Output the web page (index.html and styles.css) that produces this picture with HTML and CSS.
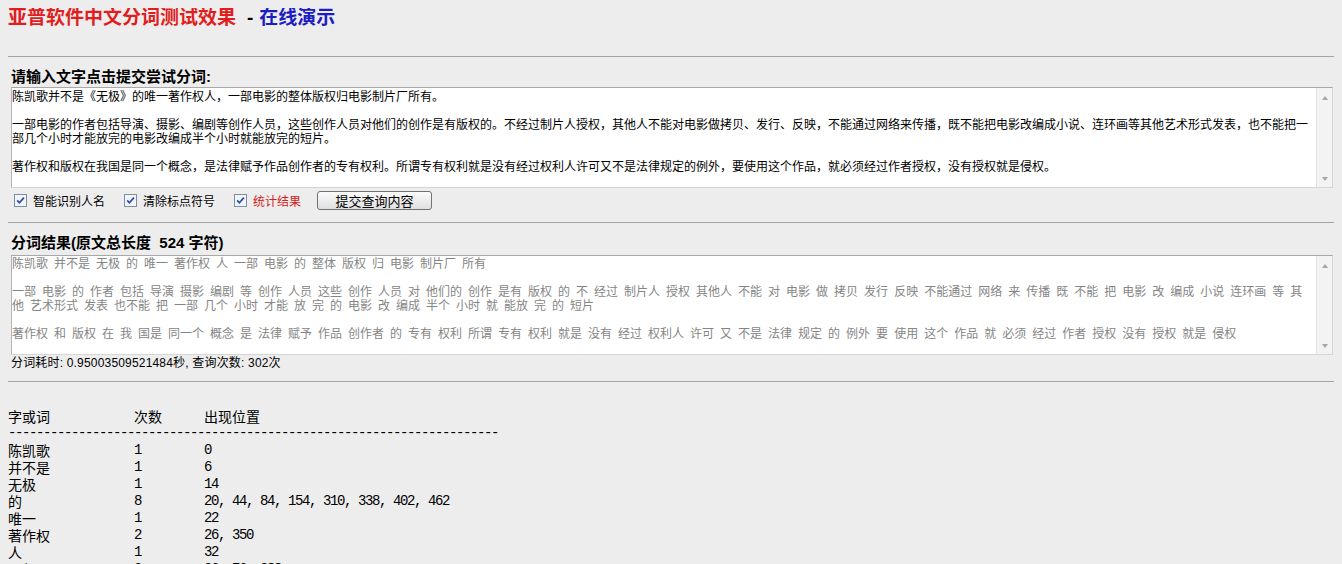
FILE: index.html
```html
<!DOCTYPE html>
<html>
<head>
  <meta charset="UTF-8">
  <title>亚普软件中文分词测试效果 - 在线演示</title>
  <link rel="stylesheet" href="styles.css">
</head>
<body>
  <h1 class="title"><span class="title-red">亚普软件中文分词测试效果</span><span class="title-dash">-</span><span class="title-blue">在线演示</span></h1>
  <hr class="rule rule-top">

  <h2 class="label">请输入文字点击提交尝试分词:</h2>
  <div class="textbox">
    <div class="textbox-text input-text">陈凯歌并不是《无极》的唯一著作权人，一部电影的整体版权归电影制片厂所有。

一部电影的作者包括导演、摄影、编剧等创作人员，这些创作人员对他们的创作是有版权的。不经过制片人授权，其他人不能对电影做拷贝、发行、反映，不能通过网络来传播，既不能把电影改编成小说、连环画等其他艺术形式发表，也不能把一部几个小时才能放完的电影改编成半个小时就能放完的短片。

著作权和版权在我国是同一个概念，是法律赋予作品创作者的专有权利。所谓专有权利就是没有经过权利人许可又不是法律规定的例外，要使用这个作品，就必须经过作者授权，没有授权就是侵权。</div>
    <div class="scrollbar"><span class="arrow-up"></span><span class="arrow-down"></span></div>
  </div>

  <div class="options">
    <label class="option">
      <svg class="check" viewBox="0 0 13 13" width="13" height="13"><rect x="0.5" y="0.5" width="12" height="12" fill="#f1f4f8" stroke="#7d8ea3"/><path d="M3.2 6.4 L5.4 8.8 L9.9 3.6" fill="none" stroke="#2b4db3" stroke-width="1.7"/></svg>
      智能识别人名
    </label>
    <label class="option">
      <svg class="check" viewBox="0 0 13 13" width="13" height="13"><rect x="0.5" y="0.5" width="12" height="12" fill="#f1f4f8" stroke="#7d8ea3"/><path d="M3.2 6.4 L5.4 8.8 L9.9 3.6" fill="none" stroke="#2b4db3" stroke-width="1.7"/></svg>
      清除标点符号
    </label>
    <label class="option option-red">
      <svg class="check" viewBox="0 0 13 13" width="13" height="13"><rect x="0.5" y="0.5" width="12" height="12" fill="#f1f4f8" stroke="#7d8ea3"/><path d="M3.2 6.4 L5.4 8.8 L9.9 3.6" fill="none" stroke="#2b4db3" stroke-width="1.7"/></svg>
      统计结果
    </label>
    <button class="submit-btn" type="button">提交查询内容</button>
  </div>
  <hr class="rule rule-mid">

  <h2 class="label">分词结果(原文总长度&nbsp; 524 字符)</h2>
  <div class="textbox textbox-result">
    <div class="textbox-text result-text">陈凯歌 并不是 无极 的 唯一 著作权 人 一部 电影 的 整体 版权 归 电影 制片厂 所有

一部 电影 的 作者 包括 导演 摄影 编剧 等 创作 人员 这些 创作 人员 对 他们的 创作 是有 版权 的 不 经过 制片人 授权 其他人 不能 对 电影 做 拷贝 发行 反映 不能通过 网络 来 传播 既 不能 把 电影 改 编成 小说 连环画 等 其他 艺术形式 发表 也不能 把 一部 几个 小时 才能 放 完 的 电影 改 编成 半个 小时 就 能放 完 的 短片

著作权 和 版权 在 我 国是 同一个 概念 是 法律 赋予 作品 创作者 的 专有 权利 所谓 专有 权利 就是 没有 经过 权利人 许可 又 不是 法律 规定 的 例外 要 使用 这个 作品 就 必须 经过 作者 授权 没有 授权 就是 侵权</div>
    <div class="scrollbar"><span class="arrow-up"></span><span class="arrow-down"></span></div>
  </div>
  <div class="timing">分词耗时: 0.95003509521484秒, 查询次数: 302次</div>
  <hr class="rule rule-bottom">

  <div class="stats">
    <div>字或词</div><div>次数</div><div>出现位置</div>
    <div class="dashes">----------------------------------------------------------------------</div>
    <div>陈凯歌</div><div class="num">1</div><div class="num">0</div>
    <div>并不是</div><div class="num">1</div><div class="num">6</div>
    <div>无极</div><div class="num">1</div><div class="num">14</div>
    <div>的</div><div class="num">8</div><div class="num">20, 44, 84, 154, 310, 338, 402, 462</div>
    <div>唯一</div><div class="num">1</div><div class="num">22</div>
    <div>著作权</div><div class="num">2</div><div class="num">26, 350</div>
    <div>人</div><div class="num">1</div><div class="num">32</div>
    <div>一部</div><div class="num">3</div><div class="num">36, 76, 288</div>
  </div>
</body>
</html>
```

FILE: styles.css
```css
body { margin: 8px; background: #ededed; color: #000; font-family: "Liberation Sans", "Noto Sans CJK SC", sans-serif; font-size: 12px; }

.title { margin: 0; font-size: 19px; line-height: 20px; font-weight: bold; }
.title-red { color: #e01e1e; }
.title-dash { margin: 0 6px 0 11px; }
.title-blue { color: #1c1cc4; }

.rule { height: 0; border: 0; border-top: 1px solid #a4a4a4; margin: 0; }
.rule-top { margin-top: 28px; }
.rule-mid { margin-top: 12px; }
.rule-bottom { margin-top: 11px; }

.label { margin: 10px 0 0 3px; font-size: 15px; line-height: 20px; font-weight: bold; }

.textbox { display: flex; justify-content: space-between; margin-left: 3px; width: 1322px; height: 101px; box-sizing: border-box; background: #fff; border: 1px solid; border-color: #a9a9a9 #d6d6d6 #d6d6d6 #b4b4b4; overflow: hidden; }
.textbox-result { margin-top: 2px; height: 100px; }
.textbox-text { width: 1293px; white-space: pre-wrap; line-height: 14px; font-size: 12px; word-spacing: 2.67px; }
.input-text { width: 1300px; padding-top: 2px; }
.result-text { padding-top: 1px; color: #858585; }

.scrollbar { display: flex; flex-direction: column; justify-content: space-between; align-items: center; width: 16px; padding: 8px 0 6px; box-sizing: border-box; background: #f3f3f3; border-left: 1px solid #e2e2e2; }
.arrow-up { width: 0; height: 0; border-left: 3px solid transparent; border-right: 3px solid transparent; border-bottom: 4px solid #a6a6a6; }
.arrow-down { width: 0; height: 0; border-left: 3px solid transparent; border-right: 3px solid transparent; border-top: 4px solid #a6a6a6; }

.options { display: flex; align-items: center; height: 19px; margin-top: 3px; padding-left: 6px; }
.option { display: flex; align-items: center; margin-right: 19px; font-size: 12px; }
.option-red { color: #d42020; margin-right: 16px; }
.check { margin-right: 6px; }
.submit-btn { width: 115px; height: 19px; padding: 0; border: 1px solid #717171; border-radius: 3px; background: linear-gradient(#fbfbfb, #e0e0e0); font-family: "Noto Sans CJK SC", sans-serif; font-size: 13px; line-height: 15px; color: #000; }

.timing { margin: 1px 0 0 3px; line-height: 14px; font-size: 12px; letter-spacing: 0.18px; }

.stats { display: grid; grid-template-columns: 126px 70px auto; margin-top: 26px; font-family: "Noto Sans CJK SC", sans-serif; font-size: 14px; line-height: 17px; }
.dashes { grid-column: 1 / 4; font-family: "Liberation Mono", monospace; letter-spacing: -1.4px; }
.num { font-family: "Liberation Mono", monospace; letter-spacing: -1.4px; }
```
